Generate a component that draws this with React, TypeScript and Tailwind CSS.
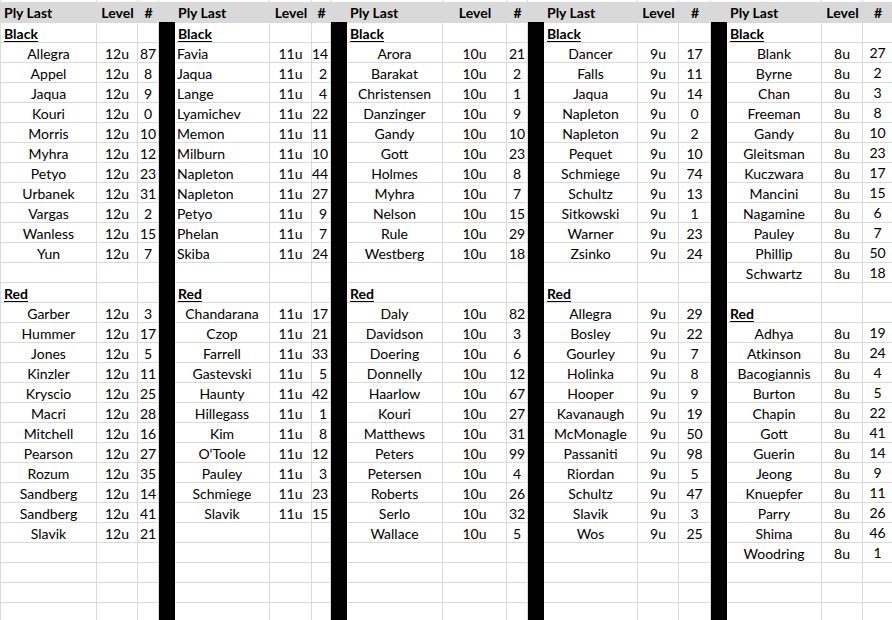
type Entry = [string, number];

type Group = {
  level: string;
  cols: string;
  black: Entry[];
  red: Entry[];
  blackLeft?: boolean;
  numRight?: boolean;
  numHigh?: boolean;
};

const groups: Group[] = [
  {
    level: "12u",
    cols: "grid-cols-[96px_41px_21px]",
    black: [
      ["Allegra", 87], ["Appel", 8], ["Jaqua", 9], ["Kouri", 0], ["Morris", 10], ["Myhra", 12],
      ["Petyo", 23], ["Urbanek", 31], ["Vargas", 2], ["Wanless", 15], ["Yun", 7],
    ],
    red: [
      ["Garber", 3], ["Hummer", 17], ["Jones", 5], ["Kinzler", 11], ["Kryscio", 25], ["Macri", 28],
      ["Mitchell", 16], ["Pearson", 27], ["Rozum", 35], ["Sandberg", 14], ["Sandberg", 41], ["Slavik", 21],
    ],
  },
  {
    level: "11u",
    cols: "grid-cols-[95px_42px_19px]",
    blackLeft: true,
    numRight: true,
    black: [
      ["Favia", 14], ["Jaqua", 2], ["Lange", 4], ["Lyamichev", 22], ["Memon", 11], ["Milburn", 10],
      ["Napleton", 44], ["Napleton", 27], ["Petyo", 9], ["Phelan", 7], ["Skiba", 24],
    ],
    red: [
      ["Chandarana", 17], ["Czop", 21], ["Farrell", 33], ["Gastevski", 5], ["Haunty", 42], ["Hillegass", 1],
      ["Kim", 8], ["O'Toole", 12], ["Pauley", 3], ["Schmiege", 23], ["Slavik", 15],
    ],
  },
  {
    level: "10u",
    cols: "grid-cols-[96px_64px_21px]",
    black: [
      ["Arora", 21], ["Barakat", 2], ["Christensen", 1], ["Danzinger", 9], ["Gandy", 10], ["Gott", 23],
      ["Holmes", 8], ["Myhra", 7], ["Nelson", 15], ["Rule", 29], ["Westberg", 18],
    ],
    red: [
      ["Daly", 82], ["Davidson", 3], ["Doering", 6], ["Donnelly", 12], ["Haarlow", 67], ["Kouri", 27],
      ["Matthews", 31], ["Peters", 99], ["Petersen", 4], ["Roberts", 26], ["Serlo", 32], ["Wallace", 5],
    ],
  },
  {
    level: "9u",
    cols: "grid-cols-[94px_41px_32px]",
    black: [
      ["Dancer", 17], ["Falls", 11], ["Jaqua", 14], ["Napleton", 0], ["Napleton", 2], ["Pequet", 10],
      ["Schmiege", 74], ["Schultz", 13], ["Sitkowski", 1], ["Warner", 23], ["Zsinko", 24],
    ],
    red: [
      ["Allegra", 29], ["Bosley", 22], ["Gourley", 7], ["Holinka", 8], ["Hooper", 9], ["Kavanaugh", 19],
      ["McMonagle", 50], ["Passaniti", 98], ["Riordan", 5], ["Schultz", 47], ["Slavik", 3], ["Wos", 25],
    ],
  },
  {
    level: "8u",
    cols: "grid-cols-[95px_41px_30px]",
    numHigh: true,
    black: [
      ["Blank", 27], ["Byrne", 2], ["Chan", 3], ["Freeman", 8], ["Gandy", 10], ["Gleitsman", 23],
      ["Kuczwara", 17], ["Mancini", 15], ["Nagamine", 6], ["Pauley", 7], ["Phillip", 50], ["Schwartz", 18],
    ],
    red: [
      ["Adhya", 19], ["Atkinson", 24], ["Bacogiannis", 4], ["Burton", 5], ["Chapin", 22], ["Gott", 41],
      ["Guerin", 14], ["Jeong", 9], ["Knuepfer", 11], ["Parry", 26], ["Shima", 46], ["Woodring", 1],
    ],
  },
];

type Row =
  | { kind: "label"; text: string }
  | { kind: "entry"; name: string; num: number; left: boolean }
  | { kind: "empty" };

const ROWS = 30;

const buildRows = (g: Group): Row[] => {
  const rows: Row[] = [{ kind: "label", text: "Black" }];
  g.black.forEach(([name, num]) => rows.push({ kind: "entry", name, num, left: !!g.blackLeft }));
  rows.push({ kind: "empty" });
  rows.push({ kind: "label", text: "Red" });
  g.red.forEach(([name, num]) => rows.push({ kind: "entry", name, num, left: false }));
  while (rows.length < ROWS) rows.push({ kind: "empty" });
  return rows;
};

const cell = "h-[20px] border-r border-b border-[#dadada] leading-[20px] whitespace-nowrap overflow-visible";

const GroupBlock = ({ g, last }: { g: Group; last: boolean }) => {
  const rows = buildRows(g);
  return (
    <div className="flex">
      <div className={`grid ${g.cols}`}>
        <div className="h-[2px] border-r border-[#dadada]" />
        <div className="h-[2px] border-r border-[#dadada]" />
        <div className="h-[2px] border-r border-[#dadada]" />

        <div className="h-[21px] bg-[#d9d9d9] pl-[3px] font-bold leading-[22px] whitespace-nowrap">Ply Last</div>
        <div className="h-[21px] bg-[#d9d9d9] text-center font-bold leading-[22px]">Level</div>
        <div className="h-[21px] bg-[#d9d9d9] text-center font-bold leading-[22px]">#</div>

        {rows.map((r, i) => {
          if (r.kind === "label") {
            return [
              <div key={`a${i}`} className={`${cell} pt-[1px] pl-[3px] font-bold underline underline-offset-2`}>
                {r.text}
              </div>,
              <div key={`b${i}`} className={cell} />,
              <div key={`c${i}`} className={cell} />,
            ];
          }
          if (r.kind === "entry") {
            return [
              <div key={`a${i}`} className={`${cell} pt-[1px] ${r.left ? "pl-[2px]" : "text-center"}`}>
                {r.name}
              </div>,
              <div key={`b${i}`} className={`${cell} pt-[1px] text-center`}>
                {g.level}
              </div>,
              <div
                key={`c${i}`}
                className={`${cell} ${g.numHigh ? "" : "pt-[1px]"} ${g.numRight ? "text-right pr-[3px]" : "text-center"}`}
              >
                {r.num}
              </div>,
            ];
          }
          return [
            <div key={`a${i}`} className={cell} />,
            <div key={`b${i}`} className={cell} />,
            <div key={`c${i}`} className={cell} />,
          ];
        })}
      </div>
      {!last && (
        <div className="flex w-[16px] flex-col">
          <div className="h-[2px] bg-white" />
          <div className="h-[20px] bg-[#d9d9d9]" />
          <div className="flex-1 bg-black" />
        </div>
      )}
    </div>
  );
};

export default function App() {
  return (
    <div
      className="flex h-[620px] w-[892px] overflow-hidden border-l border-[#dadada] bg-white text-[14px] text-black"
      style={{ fontFamily: "Lato, 'Open Sans', sans-serif" }}
    >
      {groups.map((g, i) => (
        <GroupBlock key={i} g={g} last={i === groups.length - 1} />
      ))}
    </div>
  );
}
